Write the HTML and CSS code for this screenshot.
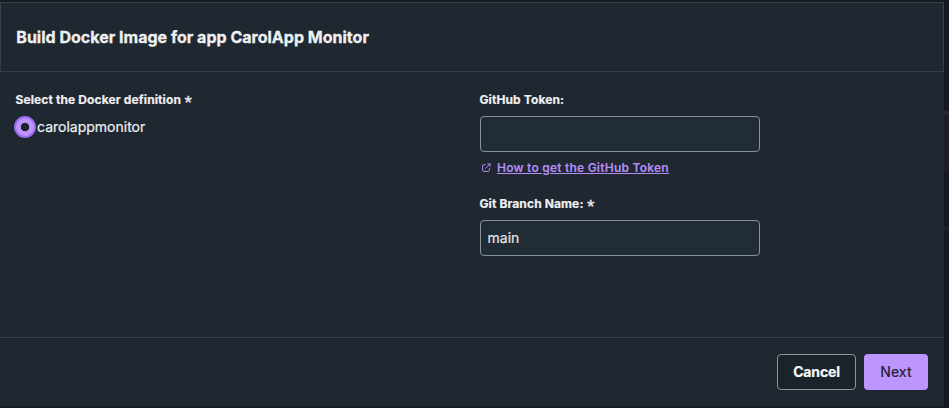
FILE: index.html
```html
<!DOCTYPE html>
<html lang="en">
<head>
<meta charset="utf-8">
<title>Build Docker Image</title>
<link rel="stylesheet" href="styles.css">
</head>
<body>
<main class="modal">
  <header class="modal-header"><h1 class="title">Build Docker Image for app CarolApp Monitor</h1></header>
  <form class="modal-body">
    <section class="column">
      <div class="label"><span class="definition-label">Select the Docker definition</span><span class="required">*</span></div>
      <label class="option"><input class="radio" type="radio" name="definition" checked><span class="option-text">carolappmonitor</span></label>
    </section>
    <section class="column">
      <label class="label" for="token"><span class="token-label">GitHub Token:</span></label>
      <input class="field" id="token" type="text">
      <a class="help" href="#">
        <svg class="help-icon" viewBox="0 0 10 10" fill="none" stroke="currentColor" stroke-width="1.1"><path d="M4.2 1.9H1.5a.8.8 0 0 0-.8.8v5.8a.8.8 0 0 0 .8.8h5.8a.8.8 0 0 0 .8-.8V5.8M6 .9h3.1V4M9 1 3.8 6.2"/></svg>
        <span class="help-text">How to get the GitHub Token</span>
      </a>
      <label class="label" for="branch"><span class="branch-label">Git Branch Name:</span><span class="required">*</span></label>
      <input class="field" id="branch" type="text" value="main">
    </section>
  </form>
  <footer class="modal-footer">
    <button class="button cancel" type="button">Cancel</button>
    <button class="button next" type="button">Next</button>
  </footer>
</main>
</body>
</html>
```
FILE: styles.css
```css
* { box-sizing: border-box; }
body {
  margin: 0;
  height: 408px;
  padding-top: 2px;
  overflow: hidden;
  background:
    linear-gradient(#24282d, #24282d) 944px 111px / 5px 4px no-repeat,
    linear-gradient(#1a1e24, #1a1e24) 944px 115px / 5px 56px no-repeat,
    linear-gradient(#1b2026, #1b2026) 944px 227px / 5px 4px no-repeat,
    linear-gradient(90deg, #181c22 0 944px, #141920 944px);
  font-family: Inter, sans-serif;
  color: #eff0f2;
}
.modal {
  display: flex;
  flex-direction: column;
  width: 944px;
  height: 404px;
  background: #1f2730;
}
.modal-header {
  display: flex;
  align-items: center;
  height: 70px;
  padding-left: 15.3px;
  border: 1px solid #363e47;
}
.title {
  margin: 0;
  font-size: 16px;
  line-height: 24px;
  font-weight: 700;
  letter-spacing: 0.01px;
  -webkit-text-stroke: 0.3px;
}
.modal-body {
  display: grid;
  grid-template-columns: 464px 280px;
  flex: 1;
  padding: 19px 0 0 16px;
}
.label {
  display: flex;
  align-items: center;
  height: 16px;
  margin-left: -0.6px;
  font-size: 12px;
  font-weight: 700;
  letter-spacing: 0.12px;
  -webkit-text-stroke: 0.2px;
}
.required {
  margin: 8px 0 0 3.5px;
  font-family: "Liberation Sans", sans-serif;
  font-size: 19px;
  font-weight: 400;
  line-height: 14px;
  -webkit-text-stroke: 0.3px;
}
.option { display: flex; align-items: center; height: 22px; margin: 9px 0 0 -2px; font-size: 14px; }
.option-text { margin-top: -2px; -webkit-text-stroke: 0.2px; }
.radio {
  appearance: none;
  width: 22px;
  height: 22px;
  margin: 0 1px 0 0;
  border: 2px solid #9c6df0;
  border-radius: 50%;
  background: radial-gradient(circle, #1c242c 3.8px, #bc95ff 4.6px);
}
.field {
  display: block;
  width: 280px;
  height: 36px;
  margin: 9px 0 0;
  padding: 0 7px 2px 6.5px;
  border: 1px solid #88929a;
  border-radius: 4px;
  background: #222c35;
  color: #e3e5e8;
  font: 400 14px Inter, sans-serif;
  letter-spacing: 0.02px;
  -webkit-text-stroke: 0.2px;
  outline: 0;
}
.help {
  display: flex;
  align-items: center;
  height: 16px;
  margin: 7px 0 20px 2px;
  color: #b58df4;
  font-size: 12px;
  font-weight: 600;
  letter-spacing: 0.23px;
}
.help-icon { width: 9px; height: 9px; margin: 1px 6px 0 0; }
.help-text { text-decoration: underline; -webkit-text-stroke: 0.1px; }
.modal-footer {
  display: flex;
  justify-content: flex-end;
  gap: 8px;
  height: 69px;
  padding: 16px 16px 0 0;
  border-top: 1px solid #363e47;
}
.button { height: 36px; padding: 0 0 1px; border-radius: 4px; font: 600 14px Inter, sans-serif; }
.cancel { width: 79px; border: 1px solid #88979f; background: #1b232a; color: #f5f6f7; font-weight: 700; letter-spacing: -0.15px; -webkit-text-stroke: 0.2px; }
.next { width: 64px; border: 0; background: #bc95ff; color: #28233a; font-weight: 500; }
```
